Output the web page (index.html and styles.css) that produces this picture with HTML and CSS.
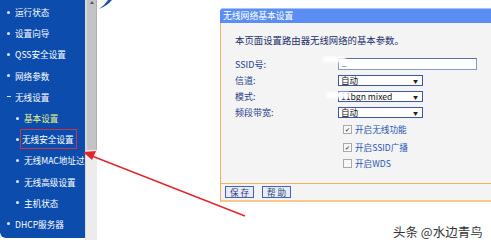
FILE: index.html
```html
<!DOCTYPE html>
<html lang="zh">
<head>
<meta charset="utf-8">
<link rel="stylesheet" href="styles.css">
</head>
<body>
<div class="page">
  <nav class="sidebar">
    <div class="item"><span class="dot"></span>运行状态</div>
    <div class="item"><span class="dot"></span>设置向导</div>
    <div class="item"><span class="dot"></span>QSS安全设置</div>
    <div class="item"><span class="dot"></span>网络参数</div>
    <div class="item"><span class="dash"></span>无线设置</div>
    <div class="item sub active"><span class="dot"></span>基本设置</div>
    <div class="item sub"><span class="dot"></span><span class="hl">无线安全设置</span></div>
    <div class="item sub"><span class="dot"></span>无线MAC地址过滤</div>
    <div class="item sub"><span class="dot"></span>无线高级设置</div>
    <div class="item sub"><span class="dot"></span>主机状态</div>
    <div class="item"><span class="dot"></span>DHCP服务器</div>
  </nav>
  <div class="scroll">
    <div class="thumb"><span class="up"></span></div>
  </div>
  <div class="gutter">
    <svg class="logo" width="14" height="10" viewBox="0 0 14 10"><path d="M1 9 Q6 6 10 0 L14 0 Q9 6 1 9 Z" fill="#1f4fa8"/></svg>
  </div>
  <main class="panel">
    <div class="title">无线网络基本设置</div>
    <div class="body">
      <p class="desc">本页面设置路由器无线网络的基本参数。</p>
      <div class="form">
        <label>SSID号:</label><div class="ctl"><span class="input">_</span></div>
        <label>信道:</label><div class="ctl"><span class="select">自动<i>▼</i></span></div>
        <label>模式:</label><div class="ctl"><span class="select">11bgn mixed<i>▼</i></span></div>
        <label>频段带宽:</label><div class="ctl"><span class="select">自动<i>▼</i></span></div>
      </div>
      <div class="checks">
        <div class="chk r1"><span class="box on">✔</span>开启无线功能</div>
        <div class="chk r2"><span class="box on">✔</span>开启SSID广播</div>
        <div class="chk r3"><span class="box"></span>开启WDS</div>
      </div>
    </div>
    <div class="btnrow">
      <span class="btn">保存</span><span class="btn">帮助</span>
    </div>
  </main>
</div>
<span class="blur b1"></span>
<span class="blur b2"></span>
<svg class="arrow" width="491" height="242" viewBox="0 0 491 242">
  <line x1="245" y1="216" x2="92" y2="156" stroke="#e3262c" stroke-width="1.4"/>
  <polygon points="83,152 96,151 92,160" fill="#e3262c"/>
</svg>
<div class="mark">头条 @水边青鸟</div>
</body>
</html>
```
FILE: styles.css
```css
html, body {
  margin: 0;
  padding: 0;
  width: 491px;
  height: 242px;
  overflow: hidden;
  background: #ffffff;
  font-family: "Noto Sans CJK SC", "DejaVu Sans", sans-serif;
}
.page {
  display: flex;
  align-items: flex-start;
  height: 242px;
}
.sidebar {
  width: 85px;
  height: 238px;
  flex: none;
  background: #0b4cad;
  border-bottom-left-radius: 6px;
  padding-top: 1.5px;
  box-sizing: border-box;
  color: #ffffff;
  font-size: 8.6px;
  overflow: hidden;
}
.item {
  height: 21.2px;
  display: flex;
  align-items: center;
  white-space: nowrap;
  padding-left: 7px;
}
.item.sub {
  padding-left: 16px;
}
.item.active {
  color: #e4f58a;
}
.dot {
  width: 3px;
  height: 3px;
  border-radius: 50%;
  background: #d7e6ff;
  margin-right: 5px;
  flex: none;
}
.dash {
  width: 4px;
  height: 1px;
  background: #d7e6ff;
  margin-right: 4px;
}
.hl {
  outline: 1px solid #c8344a;
  outline-offset: 0;
  padding: 3px 2px 3px 1px;
  margin-left: -3px;
}
.scroll {
  width: 11px;
  height: 240px;
  flex: none;
  background: #ececec;
  border-left: 1px solid #dadada;
}
.thumb {
  height: 150px;
  background: #c4c4c4;
  border-left: 1px solid #d8d8d8;
  border-right: 1px solid #b0b0b0;
  display: flex;
  justify-content: center;
}
.up {
  width: 0;
  height: 0;
  margin-top: 1px;
  border-left: 2.5px solid transparent;
  border-right: 2.5px solid transparent;
  border-bottom: 3px solid #5a5a5a;
}
.gutter {
  width: 123px;
  flex: none;
  height: 10px;
}
.logo {
  display: block;
  margin-left: 1px;
}
.panel {
  flex: none;
  width: 280px;
  margin-top: 8px;
  font-size: 9px;
}
.title {
  height: 15px;
  background: #5b8ef4;
  border-top: 1px solid #a8c4fb;
  border-top-left-radius: 3px;
  box-sizing: border-box;
  color: #ffffff;
  font-size: 8.8px;
  line-height: 14px;
  padding-left: 3px;
}
.body {
  height: 161px;
  box-sizing: border-box;
  background: #f4f4f4;
  border-left: 1px solid #f2b360;
  border-bottom: 1px solid #f2b360;
  padding: 11px 0 0 14px;
}
.desc {
  margin: 0;
  height: 12px;
  line-height: 12px;
  font-size: 9.4px;
  color: #23306a;
}
.form {
  margin-top: 10px;
  display: grid;
  grid-template-columns: 103px 140px;
  grid-auto-rows: 16px;
}
.form label {
  display: flex;
  align-items: center;
  color: #1d3d8f;
  font-size: 9px;
}
.ctl {
  display: flex;
  align-items: center;
}
.input {
  width: 139px;
  height: 12px;
  box-sizing: border-box;
  background: #ffffff;
  border: 1px solid #8a9ac8;
  border-top-color: #5d6ea8;
  font-size: 8px;
  line-height: 8px;
  padding-left: 3px;
  color: #333;
}
.select {
  width: 85px;
  height: 11px;
  box-sizing: border-box;
  background: #ffffff;
  border: 1px solid #3b55a8;
  font-size: 8.6px;
  line-height: 9px;
  padding-left: 2px;
  color: #111;
  display: flex;
  justify-content: space-between;
  white-space: nowrap;
  overflow: hidden;
}
.select i {
  font-style: normal;
  font-size: 5px;
  padding-right: 4px;
  color: #222;
}
.checks {
  margin-left: 108px;
  margin-top: 1px;
}
.chk {
  display: flex;
  align-items: center;
  color: #2955b8;
  font-size: 8.6px;
  height: 16px;
}
.chk.r2 {
  margin-top: 2px;
}
.box {
  width: 7px;
  height: 7px;
  border: 1px solid #a9a9a9;
  background: #f8f8f8;
  margin-right: 3px;
  font-size: 6px;
  line-height: 7px;
  color: #555;
  text-align: center;
  box-sizing: content-box;
}
.btnrow {
  height: 18px;
  box-sizing: border-box;
  background: #f4f4f4;
  border-left: 1px solid #f2b360;
  border-bottom: 2px solid #f6c98f;
  display: flex;
  align-items: center;
  gap: 8px;
  padding-left: 4px;
}
.btn {
  width: 29px;
  height: 12px;
  box-sizing: border-box;
  background: #e7ecf8;
  border: 1px solid #4563b5;
  color: #2a3b7a;
  font-size: 8.6px;
  line-height: 10px;
  text-align: center;
  letter-spacing: 2px;
  text-indent: 2px;
}
.blur {
  position: absolute;
  background: #ffffff;
  border-radius: 4px;
  filter: blur(1.5px);
}
.b1 {
  left: 322px;
  top: 57px;
  width: 24px;
  height: 5px;
}
.b2 {
  left: 326px;
  top: 92px;
  width: 24px;
  height: 6px;
}
.arrow {
  position: absolute;
  left: 0;
  top: 0;
}
.mark {
  position: absolute;
  left: 393px;
  top: 222px;
  font-size: 12.5px;
  color: #333333;
  white-space: nowrap;
}
```
